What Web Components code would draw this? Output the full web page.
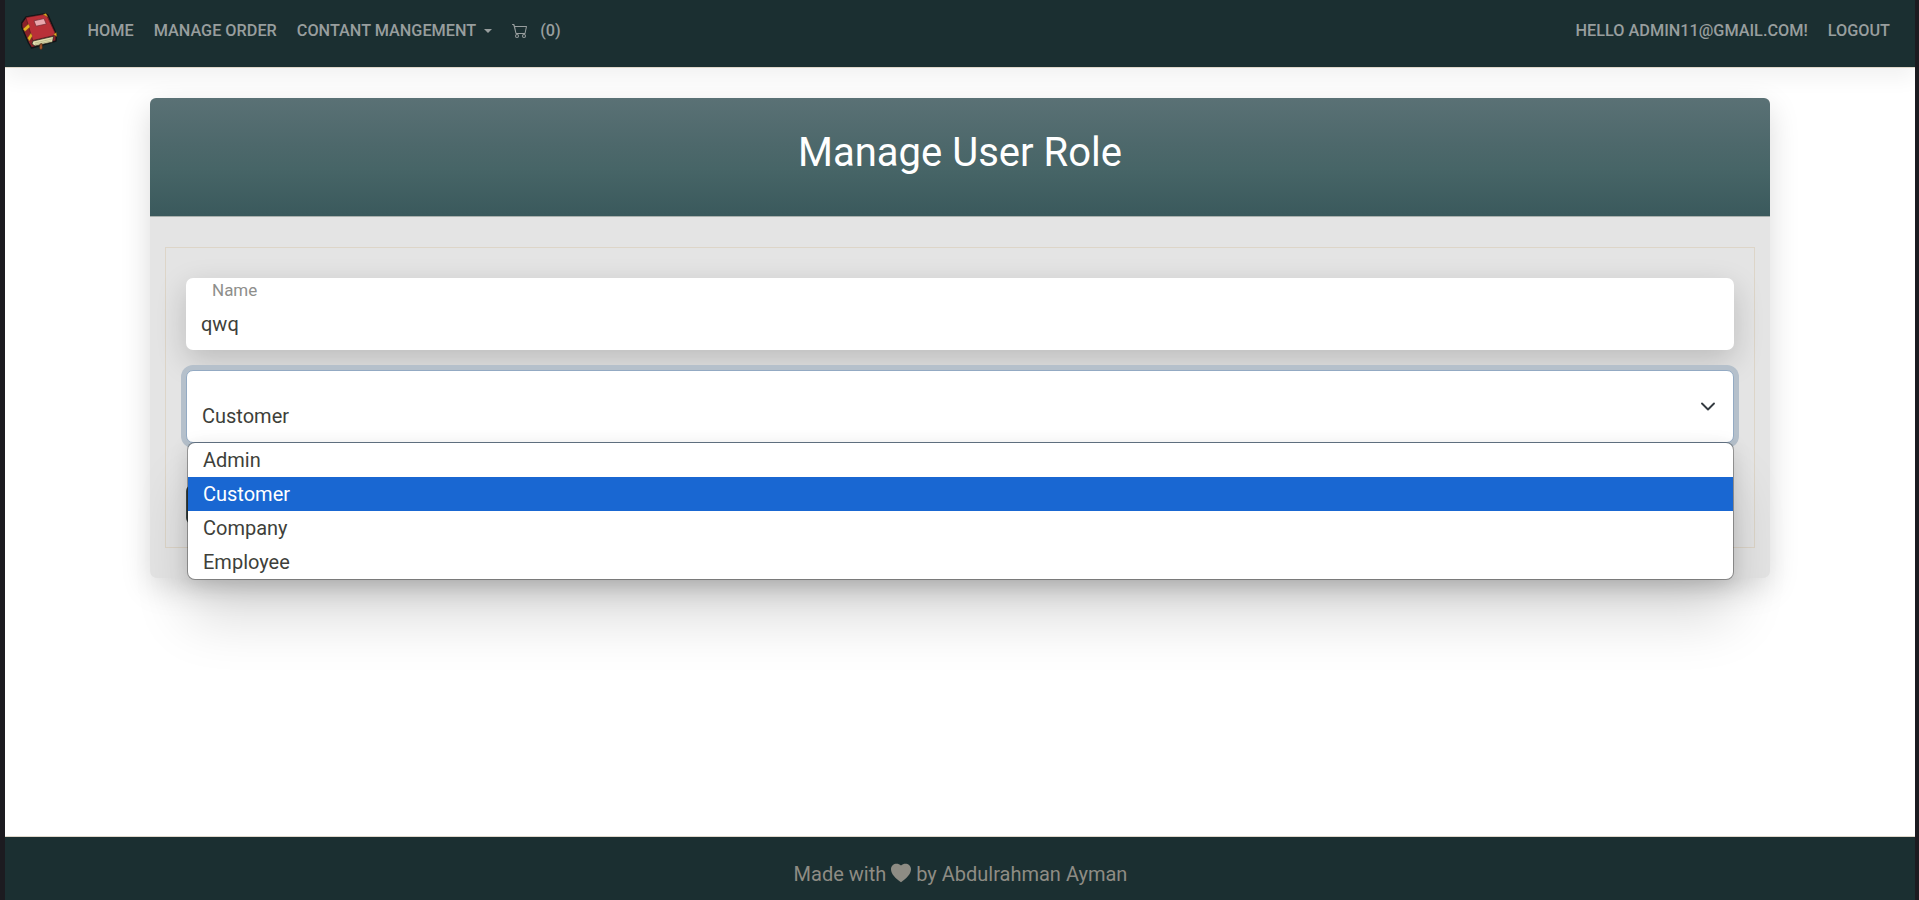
<!DOCTYPE html>
<html lang="en">
<head>
<meta charset="utf-8">
<title>Manage User Role</title>
<style>
  html { background: #1c1b20; }
  body { margin: 0; padding: 0 4px 0 5px; height: 900px; box-sizing: border-box; overflow: hidden; font-family: Roboto, sans-serif; font-size: 20px; line-height: 30px; color: #3e3f3a; }
</style>
</head>
<body>
<app-shell>
  <nav-bar slot="header">
    <nav-link>HOME</nav-link>
    <nav-link>MANAGE ORDER</nav-link>
    <nav-link caret>CONTANT MANGEMENT</nav-link>
    <nav-link><cart-icon></cart-icon>(0)</nav-link>
    <nav-link slot="end">HELLO ADMIN11@GMAIL.COM!</nav-link>
    <nav-link slot="end">LOGOUT</nav-link>
  </nav-bar>
  <role-card>
    <span slot="title">Manage User Role</span>
    <text-field label="Name">qwq</text-field>
    <select-field>Customer
      <option-item slot="options">Admin</option-item>
      <option-item slot="options" selected>Customer</option-item>
      <option-item slot="options">Company</option-item>
      <option-item slot="options">Employee</option-item>
    </select-field>
    <submit-button></submit-button>
  </role-card>
  <page-footer slot="footer">Made with <heart-icon></heart-icon> by Abdulrahman Ayman</page-footer>
</app-shell>
<script>
const define = (name, html) => customElements.define(name, class extends HTMLElement {
  constructor() {
    super();
    const t = document.createElement('template');
    t.innerHTML = html;
    this.attachShadow({ mode: 'open' }).append(t.content.cloneNode(true));
  }
  connectedCallback() {
    const label = this.shadowRoot.querySelector('[data-label]');
    if (label) label.textContent = this.getAttribute('label');
  }
});

define('app-shell', `
<style>
  :host { display: flex; flex-direction: column; height: 900px; background: #fff; overflow: hidden; }
  main { flex: 1; padding: 30px 145px 0; }
</style>
<slot name="header"></slot><main><slot></slot></main><slot name="footer"></slot>`);

define('nav-bar', `
<style>
  :host { display: flex; align-items: center; box-sizing: border-box; height: 68px; padding: 0 15px 5px 15px; background: #1b2f31; border-bottom: 1px solid #dfd7ca; box-shadow: 0 10px 20px rgba(0,0,0,.055); }
  nav { display: flex; flex: 1; margin-left: 19.5px; }
  .end { display: flex; }
  svg { display: block; margin-top: 1px; }
</style>
<svg width="38" height="40" viewBox="0 0 38 40">
  <path d="M1.700 11 6 5 25.700 1.700 28 3 36.500 22.500 36 29 11.500 36 8.500 31 1.700 15Z" fill="#8a2129" stroke="#101416" stroke-width="1.400" stroke-linejoin="round"/>
  <path d="M6 5.500 26 2 36 23 12.700 28.500Z" fill="#b93038" stroke="#4a1a1d" stroke-width=".6"/>
  <path d="M13 29 33.500 24.300 32.500 30 15 34 12 32Z" fill="#e2dcae" stroke="#25251d" stroke-width=".7"/>
  <path d="m15 31 17-4M15 32.700l16-3.700" stroke="#a3a779" stroke-width=".6"/>
  <path d="m3 17 5.500-5 1.500 3-5 4.500ZM7.500 26l3.500-5 1.400 3-3 5.200ZM23 2.500l3-1 1.700 3.500ZM33.500 22.500l2.800-2 .5 4Z" fill="#e4b020" stroke="#6b4d1b" stroke-width=".4"/>
  <path d="M14 8.800 24 6.600l2.300 5.400L16 14.200Z" fill="#e9a6ad" stroke="#6f2a30" stroke-width=".7"/>
  <path d="m20 32 2-.5.500 4.500-1.600 2-1.500-2Z" fill="#a6572a" stroke="#3d2518" stroke-width=".6"/>
</svg>
<nav><slot></slot></nav><div class="end"><slot name="end"></slot></div>`);

define('nav-link', `
<style>
  :host { display: flex; align-items: center; padding: 0 10px; height: 30px; font-size: 16.25px; font-weight: 500; line-height: 24px; color: #989e9e; white-space: nowrap; }
  i { display: none; }
  :host([caret]) i { display: block; margin-left: 8px; border: 4px solid transparent; border-top-color: currentColor; border-bottom: 0; }
</style>
<slot></slot><i></i>`);

define('cart-icon', `
<style>:host { display: block; width: 16px; height: 16px; margin-right: 12px; } svg { display: block; }</style>
<svg width="16" height="16" viewBox="0 0 16 16" fill="currentColor"><path d="M0 1.5A.5.5 0 0 1 .5 1H2a.5.5 0 0 1 .485.379L2.89 3H14.5a.5.5 0 0 1 .49.598l-1.5 7A.5.5 0 0 1 13 11H4a.5.5 0 0 1-.485-.379L1.61 3 1.11 2H.5a.5.5 0 0 1-.5-.5zM3.14 4l1.25 6h8.22l1.25-6H3.14zM5 12a1 1 0 1 0 0 2 1 1 0 0 0 0-2zm-2 1a2 2 0 1 1 4 0 2 2 0 0 1-4 0zm9-1a1 1 0 1 0 0 2 1 1 0 0 0 0-2zm-2 1a2 2 0 1 1 4 0 2 2 0 0 1-4 0z"/></svg>`);

define('role-card', `
<style>
  :host { display: block; box-sizing: border-box; height: 480px; border-radius: 7px; background: #e4e4e4; box-shadow: 0 10px 30px rgba(0,0,0,.15); }
  header { box-sizing: border-box; height: 119px; padding-top: 31px; text-align: center; color: #fff; font-size: 40px; line-height: 48px; border-radius: 6px 6px 0 0; border-bottom: 1px solid #a9b0ad; background: linear-gradient(#5a7175, #4d686b 40%, #476567 60%, #3a595c); }
  section { display: flex; flex-direction: column; gap: 20px; box-sizing: border-box; height: 301px; margin: 30px 15px 0; padding: 30px 20px; border: 1px solid #ddd5c8; }
</style>
<header><slot name="title"></slot></header><section><slot></slot></section>`);

define('text-field', `
<style>
  :host { display: block; flex: none; box-sizing: border-box; height: 72px; padding: 0 15px; background: #fff; border-radius: 7px; box-shadow: 0 10px 30px rgba(0,0,0,.18); }
  label { display: block; margin-left: 11px; height: 31px; font-size: 17px; line-height: 25px; color: #8e8e8b; }
</style>
<label data-label></label><div><slot></slot></div>`);

define('select-field', `
<style>
  :host { display: block; flex: none; position: relative; box-sizing: border-box; height: 73px; padding: 30px 15px 0; background: #fff; border: 1px solid #93aac3; border-radius: 7px; box-shadow: 0 0 0 5px #b5c0cb; }
  svg { position: absolute; right: 17px; top: 27px; }
  .menu { position: absolute; z-index: 2; left: 1px; right: 0; top: 72px; height: 136px; background: #fff; border-radius: 7px; box-shadow: 0 0 0 1px rgba(0,0,0,.32), 0 5px 20px rgba(0,0,0,.13), 0 40px 56px rgba(0,0,0,.14); }
</style>
<slot></slot>
<svg width="16" height="16" viewBox="0 0 16 16" fill="none" stroke="#343a40" stroke-width="1.9" stroke-linecap="round" stroke-linejoin="round"><path d="m2 5.500 6 6 6-6"/></svg>
<div class="menu"><slot name="options"></slot></div>`);

define('option-item', `
<style>
  :host { display: block; height: 34px; line-height: 34px; padding-left: 15px; }
  :host([selected]) { background: #1967d2; color: #fff; }
</style><slot></slot>`);

define('submit-button', `
<style>:host { display: block; margin-top: 22px; width: 50%; height: 39px; flex: none; border-radius: 6px; background: #3d4848; }</style>`);

define('page-footer', `
<style>:host { display: block; box-sizing: border-box; height: 64px; padding: 22px 0 0 1px; text-align: center; color: #8e8c84; background: #1b2f31; border-top: 1px solid #dfd7ca; }</style><slot></slot>`);

define('heart-icon', `
<style>:host { display: inline-block; width: 20px; height: 20px; vertical-align: -2px; } svg { display: block; }</style>
<svg width="20" height="20" viewBox="0 0 20 20"><path fill="currentColor" d="M10 19.2C4.5 15.2 0 11.4 0 6.3 0 .8 6.4-.8 10 2.5c3.6-3.3 10-1.7 10 3.8 0 5.1-4.5 8.9-10 12.9Z"/></svg>`);
</script>
</body>
</html>
